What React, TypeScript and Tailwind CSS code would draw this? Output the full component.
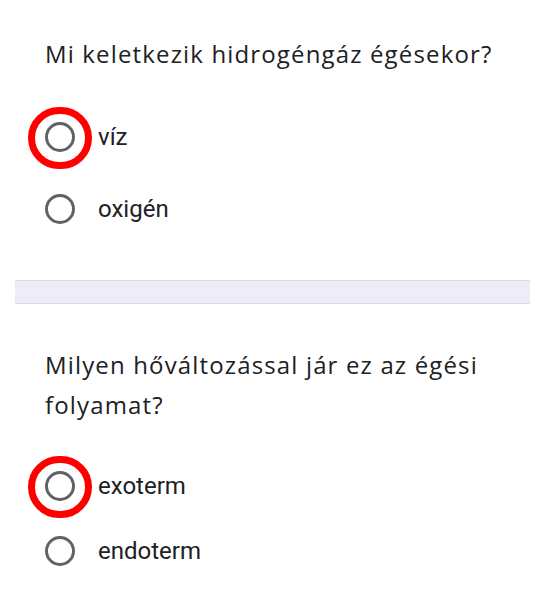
import React from 'react';

interface Option {
  label: string;
  marked?: boolean;
}

interface Question {
  title: string;
  options: Option[];
}

const questions: Question[] = [
  {
    title: 'Mi keletkezik hidrogéngáz égésekor?',
    options: [{ label: 'víz', marked: true }, { label: 'oxigén' }],
  },
  {
    title: 'Milyen hőváltozással jár ez az égési folyamat?',
    options: [{ label: 'exoterm', marked: true }, { label: 'endoterm' }],
  },
];

// Unchecked radio, with the red hand-drawn ring when the answer is marked
const Radio = ({ marked }: { marked?: boolean }) => (
  <span className="relative flex h-[30px] w-[30px] shrink-0 items-center justify-center">
    <span className="h-[30px] w-[30px] rounded-full border-[3px] border-[#5f6368]" />
    {marked && (
      <span className="pointer-events-none absolute left-[-17px] top-[-15px] h-[62px] w-[64px] rounded-full border-[7px] border-[#ff0000]" />
    )}
  </span>
);

const OptionRow = ({ option }: { option: Option }) => (
  <div className="flex h-[48px] items-center gap-[23px]">
    <Radio marked={option.marked} />
    <span className="text-[24px] leading-none text-[#202124]">{option.label}</span>
  </div>
);

const Title = ({ children }: { children: React.ReactNode }) => (
  <h2
    className="text-[24px] font-normal leading-[40px] tracking-[1.15px] text-[#202124]"
    style={{ fontFamily: '"Open Sans", Roboto, sans-serif' }}
  >
    {children}
  </h2>
);

export default function App() {
  const [first, second] = questions;

  return (
    <div
      className="h-[602px] w-[535px] overflow-hidden bg-white"
      style={{ fontFamily: 'Roboto, "Noto Sans", sans-serif' }}
    >
      <section className="h-[280px] pl-[45px] pr-[10px] pt-[34px]">
        <Title>{first.title}</Title>
        <div className="mt-[39px] flex flex-col gap-[24px]">
          {first.options.map((o) => (
            <OptionRow key={o.label} option={o} />
          ))}
        </div>
      </section>

      <div className="ml-[15px] mr-[5px] h-[24px] border-y border-[#dadce0] bg-[#f0ebf8]" />

      <section className="pl-[45px] pr-[30px] pt-[41px]">
        <Title>{second.title}</Title>
        <div className="mt-[37px] flex flex-col gap-[17px]">
          {second.options.map((o) => (
            <OptionRow key={o.label} option={o} />
          ))}
        </div>
      </section>
    </div>
  );
}
